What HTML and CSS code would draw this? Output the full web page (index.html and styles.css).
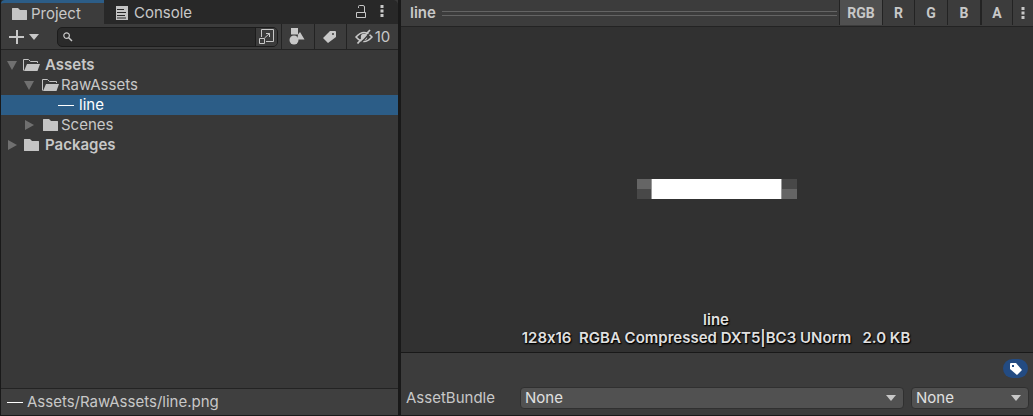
FILE: index.html
```html
<!DOCTYPE html>
<html lang="en">
<head>
<meta charset="utf-8">
<title>Project</title>
<link rel="stylesheet" href="styles.css">
</head>
<body>
<svg class="symbols" aria-hidden="true">
  <symbol id="folder" viewBox="0 0 16 14"><path d="M0 1.5Q0 1 .5 1H6L8 3H14.500Q15 3 15 3.500V12.500Q15 13 14.500 13H.5Q0 13 0 12.500Z" fill="currentColor"/></symbol>
  <symbol id="folder-open" viewBox="0 0 18 14"><path d="M.5 12.500V1.500H5.500L7.500 3.500H14.500V5" fill="none" stroke="currentColor"/><path d="M4 6H17L14.500 13H1Z" fill="currentColor"/></symbol>
  <symbol id="down" viewBox="0 0 10 6"><path d="M0 0H10L5 6Z" fill="currentColor"/></symbol>
  <symbol id="tri-down" viewBox="0 0 10 10"><path d="M0 1H10L5 10Z" fill="currentColor"/></symbol>
  <symbol id="tri-right" viewBox="0 0 10 10"><path d="M1 0L10 5L1 10Z" fill="currentColor"/></symbol>
  <symbol id="dots" viewBox="0 0 4 14"><path d="M.5 1H3.500V4H.5ZM.5 5.500H3.500V8.500H.5ZM.5 10H3.500V13H.5Z" fill="currentColor"/></symbol>
</svg>
<main class="editor">
  <section class="project">
    <header class="tabs">
      <button class="tab active"><svg width="16" height="14"><use href="#folder"/></svg>Project</button>
      <button class="tab"><svg width="12" height="14" viewBox="0 0 12 14"><path d="M0 0H12V14H0Z" fill="currentColor"/><path d="M1 3.500H8M1 6.500H10M1 9.500H9M1 12H10" stroke="#282828"/></svg>Console</button>
      <span class="tab-tools">
        <button class="icon-button" aria-label="Lock"><svg width="10" height="13" viewBox="0 0 10 13"><path d="M.5 7.500H9.500V12.500H.5ZM2.500 3V1.500Q2.500 .5 3.500 .5H7Q8.500 .5 8.500 2V7" fill="none" stroke="currentColor"/></svg></button>
        <button class="icon-button" aria-label="Panel menu"><svg width="4" height="14"><use href="#dots"/></svg></button>
      </span>
    </header>
    <div class="toolbar">
      <button class="add" aria-label="Create"><svg width="16" height="16" viewBox="0 0 16 16"><path d="M8 1V15M0 8H15" stroke="currentColor" stroke-width="2"/></svg><svg width="10" height="6"><use href="#down"/></svg></button>
      <div class="search">
        <svg width="10" height="10" viewBox="0 0 10 10"><circle cx="3.600" cy="3.600" r="2.800" fill="none" stroke="currentColor" stroke-width="1.200"/><path d="M5.500 5.500L9 9" stroke="currentColor" stroke-width="1.500"/></svg>
        <input type="text" aria-label="Search assets">
        <button class="open-search" aria-label="Open in search"><svg width="15" height="15" viewBox="0 0 15 15"><path d="M2.500 8V.5H14.500V12.500H7M.5 9.500H5.500V14.500H.5ZM5.500 9L10.500 4.500M7 4.500H10.500V8" fill="none" stroke="currentColor"/></svg></button>
      </div>
      <button class="tool" aria-label="Filter by type"><svg width="16" height="17" viewBox="0 0 16 17"><path d="M2 0H9V6.500H2ZM11 4L15.500 11.500H9Q8.500 8 9 6.500Z" fill="currentColor"/><circle cx="5" cy="12" r="4.500" fill="currentColor"/></svg></button>
      <button class="tool narrow" aria-label="Filter by label"><svg width="14" height="14" viewBox="0 0 14 14"><path fill-rule="evenodd" d="M7 1L12 1Q13 1 13 2V7L5 13L0 8ZM10 3A1 1 0 1 0 10 5A1 1 0 1 0 10 3Z" fill="currentColor"/></svg></button>
      <button class="tool hidden-count"><svg width="18" height="16" viewBox="0 0 18 16"><path d="M1 8Q9-1 17 8Q9 17 1 8Z" fill="none" stroke="currentColor" stroke-width="1.500"/><circle cx="9" cy="8" r="3.200" fill="currentColor"/><path d="M4.500 15.500L16.500 2.500" stroke="#3c3c3c" stroke-width="1.500"/><path d="M2.500 14.500L15 1" stroke="currentColor" stroke-width="1.800"/></svg>10</button>
    </div>
    <ul class="tree" role="tree">
      <li class="row strong" role="treeitem" aria-expanded="true"><svg class="toggle" width="10" height="10"><use href="#tri-down"/></svg><svg class="kind" width="18" height="14"><use href="#folder-open"/></svg>Assets</li>
      <li class="row level-2" role="treeitem" aria-expanded="true"><svg class="toggle" width="10" height="10"><use href="#tri-down"/></svg><svg class="kind" width="18" height="14"><use href="#folder-open"/></svg>RawAssets</li>
      <li class="row level-3 selected" role="treeitem" aria-selected="true"><span class="texture"></span>line</li>
      <li class="row level-2" role="treeitem" aria-expanded="false"><svg class="toggle" width="10" height="10"><use href="#tri-right"/></svg><svg class="kind" width="16" height="14"><use href="#folder"/></svg>Scenes</li>
      <li class="row strong" role="treeitem" aria-expanded="false"><svg class="toggle" width="10" height="10"><use href="#tri-right"/></svg><svg class="kind" width="16" height="14"><use href="#folder"/></svg>Packages</li>
    </ul>
    <footer class="path"><span class="texture"></span>Assets/RawAssets/line.png</footer>
  </section>
  <section class="inspector">
    <header class="preview-bar">
      <h2 class="preview-title">line</h2>
      <span class="grip"></span>
      <div class="channels">
        <button class="channel wide on">RGB</button>
        <button class="channel red">R</button>
        <button class="channel">G</button>
        <button class="channel">B</button>
        <button class="channel alpha">A</button>
        <button class="channel menu" aria-label="Preview menu"><svg width="4" height="14"><use href="#dots"/></svg></button>
      </div>
    </header>
    <div class="preview">
      <div class="canvas">
        <svg width="160" height="20" viewBox="0 0 160 20" role="img" aria-label="line texture"><path d="M0 0H15V10H0ZM144 10H160V20H144Z" fill="#656565"/><path d="M0 10H15V20H0ZM144 0H160V10H144Z" fill="#484848"/><path d="M14 0H145V20H14Z" fill="#999"/><path d="M15 0H144V20H15Z" fill="#fff"/></svg>
      </div>
      <p class="info">line<br>128x16&nbsp; RGBA Compressed DXT5|BC3 UNorm&nbsp;&nbsp; 2.0 KB</p>
    </div>
    <div class="bundle">
      <button class="label-button" aria-label="Asset labels"><svg width="14" height="14" viewBox="0 0 14 14"><path fill-rule="evenodd" d="M1 2Q1 1 2 1H7L13 8L8 13L1 7ZM3 3V5H5V3Z" fill="currentColor"/></svg></button>
      <div class="bundle-row">
        <label class="bundle-label" for="bundle">AssetBundle</label>
        <span class="select"><select id="bundle"><option>None</option></select><svg width="10" height="6"><use href="#down"/></svg></span>
        <span class="select variant"><select aria-label="AssetBundle variant"><option>None</option></select><svg width="10" height="6"><use href="#down"/></svg></span>
      </div>
    </div>
  </section>
</main>
</body>
</html>
```

FILE: styles.css
```css
* { box-sizing: border-box; }
body {
  margin: 0;
  background: #191919;
  color: #c8c8c8;
  font: 15px/20px Inter, "Liberation Sans", sans-serif;
  font-variant-ligatures: no-contextual;
}
button, input, select { margin: 0; padding: 0; border: 0; border-radius: 0; background: none; color: inherit; font: inherit; }
svg { display: block; flex: none; }
.symbols { position: absolute; width: 0; height: 0; }
.editor {
  display: grid;
  grid-template-columns: 397fr 632fr;
  gap: 3px;
  height: 100vh;
  padding: 0 0 1px 1px;
}
.project, .inspector { display: flex; flex-direction: column; min-width: 0; background: #383838; }

.tabs { display: flex; height: 24px; background: #282828; border-radius: 0 5px 0 0; }
.tab { display: flex; align-items: center; gap: 3px; padding: 2px 11px 0; }
.tab svg { color: #c4c4c4; }
.tab.active { width: 103px; border-top: 3px solid #2c5d87; border-radius: 4px 0 0 0; background: #3c3c3c; padding-top: 0; }
.tab + .tab { gap: 6px; padding-left: 12px; }
.tab-tools { display: flex; align-items: center; gap: 14px; margin-left: auto; padding: 0 14px 2px 0; }

.toolbar { display: flex; height: 26px; background: #3c3c3c; border-bottom: 1px solid #232323; }
.add { display: flex; align-items: center; gap: 4px; padding: 0 18px 0 8px; }
.search { display: flex; flex: 1; align-items: center; align-self: center; height: 20px; margin-right: 3px; padding-left: 5px; border: 1px solid #1c1c1c; border-radius: 5px; background: #2a2a2a; overflow: hidden; }
.search input { flex: 1; min-width: 0; outline: none; padding: 0 4px; }
.open-search { display: flex; align-items: center; align-self: stretch; padding: 0 3px; border-left: 1px solid #1c1c1c; background: #3c3c3c; }
.tool { display: flex; align-items: center; justify-content: center; width: 33px; border-left: 1px solid #232323; }
.tool:not(.hidden-count) { padding-right: 2px; }
.narrow { width: 32px; }
.hidden-count { width: 52px; gap: 2px; }

.tree { flex: 1; margin: 0; padding: 5px 0; list-style: none; }
.row { display: flex; align-items: center; height: 20px; padding-left: 6px; }
.toggle { margin-right: 6px; color: #707070; }
.kind { width: 18px; margin-right: 4px; color: #c4c4c4; }
.level-2 { padding-left: 23px; }
.level-2 .toggle { margin-right: 8px; }
.level-2 .kind { margin-right: 1px; }
.level-3 { padding-left: 57px; }
.strong { font-weight: 600; }
.selected { background: #2c5d87; color: #fff; }
.texture { width: 16px; height: 1px; margin-right: 5px; background: #fff; }
.path { display: flex; align-items: center; height: 27px; padding-left: 6px; border-top: 1px solid #232323; background: #3f3f3f; }
.path .texture { margin-right: 4px; }

.preview-bar { display: flex; align-items: center; height: 27px; background: #3c3c3c; border-bottom: 1px solid #232323; }
.preview-title { margin: 0 6px 0 9px; font-size: 15px; font-weight: 600; }
.grip { flex: 1; height: 5px; border: solid #646464; border-width: 1px 0; }
.channels { display: flex; align-self: stretch; margin-left: 2px; }
.channel { width: 33px; height: 25px; border-left: 1px solid #232323; font: 700 14px/20px Roboto, sans-serif; }
.channel.wide { width: 43px; }
.channel.red { width: 32px; }
.channel.alpha { width: 32px; border-left-width: 2px; }
.channel.on { background: #505050; }
.channel.menu { display: flex; align-items: center; justify-content: center; width: 21px; }

.preview { display: grid; grid-template-rows: 1fr auto; flex: 1; background: #313131; }
.canvas { grid-area: 1 / 1 / 3 / 2; display: grid; place-items: center; padding-bottom: 2px; }
.info { grid-area: 2 / 1; margin: 0; padding: 0 2px 5px 0; color: #e0e0e0; font-weight: 600; line-height: 18px; text-align: center; text-shadow: 1px 1px 1px #000, 0 1px 2px #000; }

.bundle { display: flex; flex-direction: column; gap: 9px; height: 63px; padding: 6px 4px 5px 5px; border-top: 1px solid #191919; background: #3c3c3c; }
.label-button { display: grid; place-items: center; align-self: flex-end; width: 25px; height: 19px; margin-right: 1px; border-radius: 10px; background: #234b82; color: #fff; }
.bundle-row { display: flex; align-items: center; gap: 7px; }
.bundle-label { width: 107px; }
.select { display: grid; flex: 1; align-items: center; }
.select select { grid-area: 1 / 1; width: 100%; height: 22px; padding: 0 4px; appearance: none; border: 1px solid #303030; border-radius: 4px; background: #515151; color: #e0e0e0; }
.select svg { grid-area: 1 / 1; justify-self: end; margin-right: 8px; pointer-events: none; z-index: 1; }
.variant { flex: 0 0 118px; }
```
